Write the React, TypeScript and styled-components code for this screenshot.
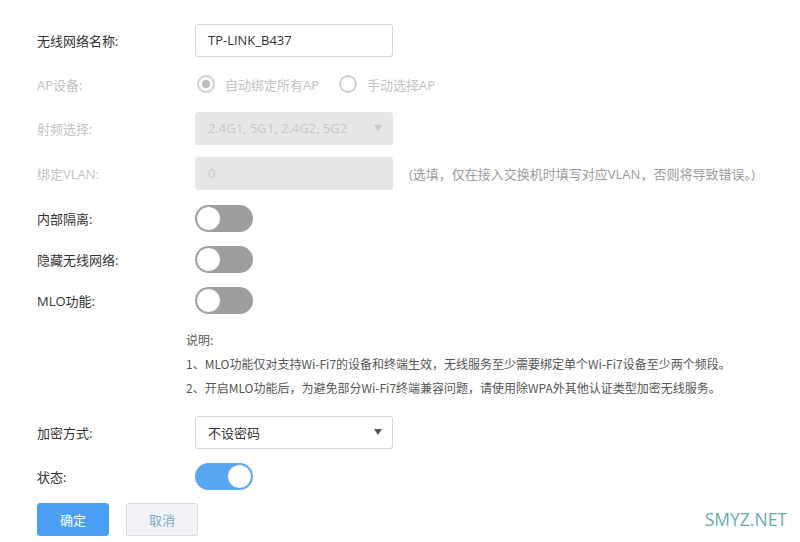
import styled, { createGlobalStyle } from 'styled-components';

const GlobalStyle = createGlobalStyle`
  html, body {
    margin: 0;
    padding: 0;
    background: #ffffff;
  }
  body {
    font-family: "Open Sans", "Noto Sans CJK SC", sans-serif;
    color: #333;
  }
`;

/** 전체 페이지 */
const Page = styled.div`
  position: relative;
  width: 800px;
  height: 542px;
  padding: 18px 0 0 37px;
  box-sizing: border-box;
  display: flex;
  flex-direction: column;
  overflow: hidden;
`;

const Row = styled.div<{ $h: number; $mt?: number }>`
  display: flex;
  align-items: center;
  height: ${(p) => p.$h}px;
  margin-top: ${(p) => p.$mt ?? 0}px;
`;

const Label = styled.div<{ $disabled?: boolean }>`
  width: 158px;
  flex-shrink: 0;
  font-size: 13px;
  color: ${(p) => (p.$disabled ? '#c2c2c2' : '#333')};
`;

const TextInput = styled.div<{ $disabled?: boolean }>`
  width: 198px;
  height: 33px;
  box-sizing: border-box;
  border: 1px solid ${(p) => (p.$disabled ? '#e6e6e6' : '#d6d6d6')};
  border-radius: 3px;
  background: ${(p) => (p.$disabled ? '#e6e6e6' : '#fff')};
  color: ${(p) => (p.$disabled ? '#c6c6c6' : '#333')};
  font-size: 13px;
  display: flex;
  align-items: center;
  padding: 0 12px;
`;

const Select = styled(TextInput)`
  justify-content: space-between;
  padding-right: 10px;
`;

const Arrow = styled.span<{ $disabled?: boolean }>`
  width: 0;
  height: 0;
  border-left: 4px solid transparent;
  border-right: 4px solid transparent;
  border-top: 6px solid ${(p) => (p.$disabled ? '#c8c8c8' : '#555')};
`;

const Hint = styled.span`
  margin-left: 16px;
  font-size: 13px;
  color: #9a9a9a;
`;

const RadioGroup = styled.div`
  display: flex;
  align-items: center;
  gap: 18px;
`;

const RadioItem = styled.div`
  display: flex;
  align-items: center;
  gap: 10px;
  font-size: 13px;
  color: #c2c2c2;
`;

const RadioCircle = styled.span<{ $checked?: boolean }>`
  width: 18px;
  height: 18px;
  box-sizing: border-box;
  border-radius: 50%;
  border: 2px solid #d0d0d0;
  display: flex;
  align-items: center;
  justify-content: center;
  margin-left: 2px;
  &::after {
    content: '';
    width: 8px;
    height: 8px;
    border-radius: 50%;
    background: ${(p) => (p.$checked ? '#bdbdbd' : 'transparent')};
  }
`;

const Switch = styled.div<{ $on?: boolean }>`
  width: 58px;
  height: 27px;
  box-sizing: border-box;
  border-radius: 14px;
  background: ${(p) => (p.$on ? '#5aa5f0' : '#9e9e9e')};
  display: flex;
  align-items: center;
  justify-content: ${(p) => (p.$on ? 'flex-end' : 'flex-start')};
  padding: 0 1px;
`;

const Knob = styled.span<{ $on?: boolean }>`
  width: 25px;
  height: 25px;
  box-sizing: border-box;
  border-radius: 50%;
  background: #fff;
  border: 1px solid ${(p) => (p.$on ? '#5aa5f0' : '#9e9e9e')};
`;

const Notes = styled.div`
  margin: 6px 0 0 149px;
  font-size: 12px;
  line-height: 24px;
  color: #555;
  font-family: "Noto Sans CJK SC", sans-serif;
`;

const Buttons = styled.div`
  display: flex;
  gap: 17px;
  margin-top: 5px;
`;

const Button = styled.button<{ $primary?: boolean }>`
  width: 72px;
  height: 33px;
  border-radius: 3px;
  font-size: 13px;
  font-family: "Noto Sans CJK SC", sans-serif;
  border: 1px solid ${(p) => (p.$primary ? '#4a9ff5' : '#d8dbe0')};
  background: ${(p) => (p.$primary ? '#4a9ff5' : '#f1f3f6')};
  color: ${(p) => (p.$primary ? '#fff' : '#7ea8d2')};
  padding: 0;
`;

const Watermark = styled.div`
  position: absolute;
  right: 13px;
  bottom: 11px;
  font-size: 17.5px;
  color: #6aa9b9;
  font-family: "Open Sans", sans-serif;
`;

function Toggle({ on }: { on?: boolean }) {
  return (
    <Switch $on={on}>
      <Knob $on={on} />
    </Switch>
  );
}

export default function App() {
  return (
    <Page>
      <GlobalStyle />
      <Row $h={44}>
        <Label>无线网络名称:</Label>
        <TextInput>TP-LINK_B437</TextInput>
      </Row>
      <Row $h={44}>
        <Label $disabled>AP设备:</Label>
        <RadioGroup>
          <RadioItem>
            <RadioCircle $checked />
            自动绑定所有AP
          </RadioItem>
          <RadioItem>
            <RadioCircle />
            手动选择AP
          </RadioItem>
        </RadioGroup>
      </Row>
      <Row $h={44}>
        <Label $disabled>射频选择:</Label>
        <Select $disabled>
          2.4G1, 5G1, 2.4G2, 5G2
          <Arrow $disabled />
        </Select>
      </Row>
      <Row $h={46}>
        <Label $disabled>绑定VLAN:</Label>
        <TextInput $disabled>0</TextInput>
        <Hint>(选填，仅在接入交换机时填写对应VLAN，否则将导致错误。)</Hint>
      </Row>
      <Row $h={44}>
        <Label>内部隔离:</Label>
        <Toggle />
      </Row>
      <Row $h={38}>
        <Label>隐藏无线网络:</Label>
        <Toggle />
      </Row>
      <Row $h={44}>
        <Label>MLO功能:</Label>
        <Toggle />
      </Row>
      <Notes>
        <div>说明:</div>
        <div>1、MLO功能仅对支持Wi-Fi7的设备和终端生效，无线服务至少需要绑定单个Wi-Fi7设备至少两个频段。</div>
        <div>2、开启MLO功能后，为避免部分Wi-Fi7终端兼容问题，请使用除WPA外其他认证类型加密无线服务。</div>
      </Notes>
      <Row $h={44} $mt={10}>
        <Label>加密方式:</Label>
        <Select>
          不设密码
          <Arrow />
        </Select>
      </Row>
      <Row $h={44}>
        <Label>状态:</Label>
        <Toggle on />
      </Row>
      <Buttons>
        <Button $primary>确定</Button>
        <Button>取消</Button>
      </Buttons>
      <Watermark>SMYZ.NET</Watermark>
    </Page>
  );
}
